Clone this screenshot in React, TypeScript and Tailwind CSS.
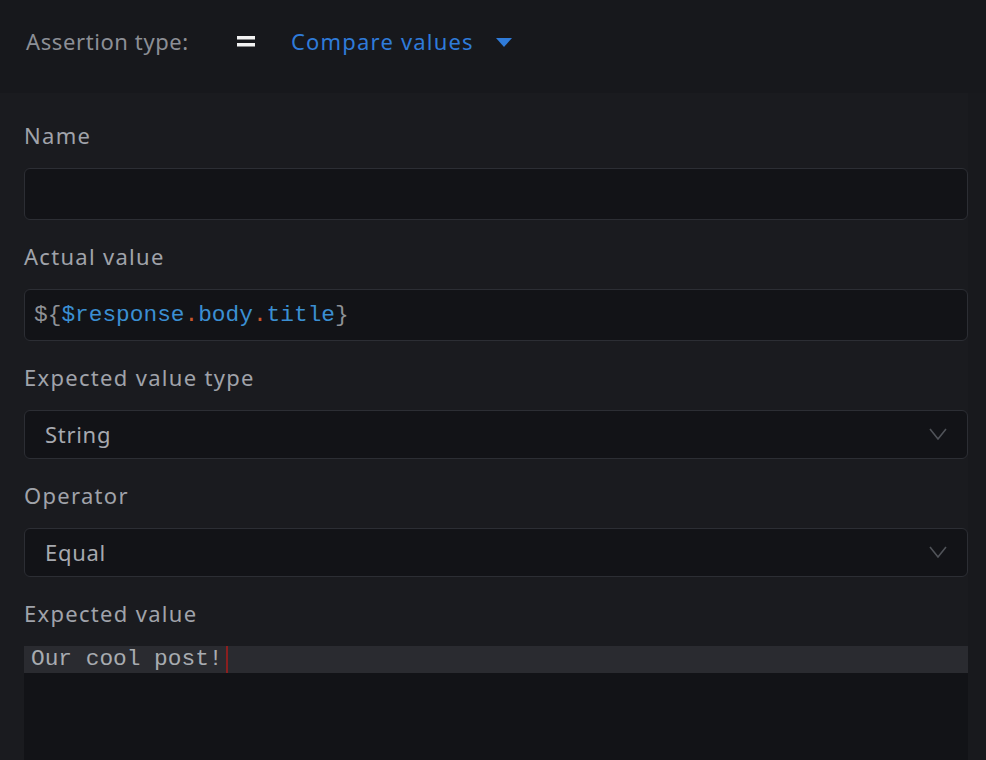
const labelCls = "text-[22px] leading-[30px] tracking-[1.3px] text-[#a0a3aa]";

function Field({ label, children }: { label: string; children: React.ReactNode }) {
  return (
    <div className="flex flex-col">
      <div className={labelCls}>{label}</div>
      {children}
    </div>
  );
}

function TextBox({ children }: { children?: React.ReactNode }) {
  return (
    <div className="mt-[18px] h-[52px] rounded-[6px] border border-[#2c2e34] bg-[#121317] px-[9px] flex items-center">
      {children}
    </div>
  );
}

function SelectBox({ value }: { value: string }) {
  return (
    <div className="mt-[18px] h-[49px] rounded-[6px] border border-[#2c2e34] bg-[#121317] pl-[20px] pr-[20px] flex items-center justify-between">
      <span className="text-[22px] tracking-[0.7px] text-[#a6a9af]">{value}</span>
      <svg width="18" height="13" viewBox="0 0 18 13" fill="none">
        <path d="M1 1 L9 11 L17 1" stroke="#505359" strokeWidth="1.6" />
      </svg>
    </div>
  );
}

export default function App() {
  return (
    <div
      className="w-[986px] h-[760px] overflow-hidden bg-[#17181c] flex flex-col"
      style={{ fontFamily: '"Noto Sans", "Open Sans", sans-serif' }}
    >
      {/* header */}
      <div className="h-[93px] shrink-0 flex items-center pl-[26px] pb-[10px] text-[22px] tracking-[0.6px]">
        <span className="text-[#8c8f96]">Assertion type:</span>
        <svg className="ml-[48px]" width="18" height="12" viewBox="0 0 18 12">
          <rect x="0" y="0" width="18" height="3.5" fill="#f2f2f2" />
          <rect x="0" y="7" width="18" height="3.5" fill="#f2f2f2" />
        </svg>
        <span className="ml-[36px] tracking-[1.2px] text-[#2f7bd9]">Compare values</span>
        <svg className="ml-[22px] mt-[2px]" width="16" height="10" viewBox="0 0 16 10">
          <path d="M0 0 L16 0 L8 9 Z" fill="#2f7bd9" />
        </svg>
      </div>

      <div className="flex flex-1">
        <div className="w-[968px] bg-[#1a1b1f] pl-[24px] pt-[27px] flex flex-col gap-[21px]">
          <Field label="Name">
            <TextBox />
          </Field>
          <Field label="Actual value">
            <TextBox>
              <span
                className="text-[22.8px] leading-none"
                style={{ fontFamily: '"Liberation Mono", monospace' }}
              >
                <span className="text-[#8e9196]">{"${"}</span>
                <span className="text-[#3b8fd2]">$response</span>
                <span className="text-[#c8562b]">.</span>
                <span className="text-[#3b8fd2]">body</span>
                <span className="text-[#c8562b]">.</span>
                <span className="text-[#3b8fd2]">title</span>
                <span className="text-[#8e9196]">{"}"}</span>
              </span>
            </TextBox>
          </Field>
          <Field label="Expected value type">
            <SelectBox value="String" />
          </Field>
          <Field label="Operator">
            <SelectBox value="Equal" />
          </Field>
          <Field label="Expected value">
            <div className="mt-[18px] h-[200px] bg-[#121317]">
              <div className="h-[27px] bg-[#2a2b30] flex items-center pl-[7px]">
                <span
                  className="text-[22.8px] leading-none text-[#a8acb0]"
                  style={{ fontFamily: '"Liberation Mono", monospace' }}
                >
                  Our cool post!
                </span>
                <span className="ml-[3px] w-[2px] h-[27px] bg-[#8b1f1f]" />
              </div>
            </div>
          </Field>
        </div>
        <div className="flex-1 bg-[#18191d]" />
      </div>
    </div>
  );
}
